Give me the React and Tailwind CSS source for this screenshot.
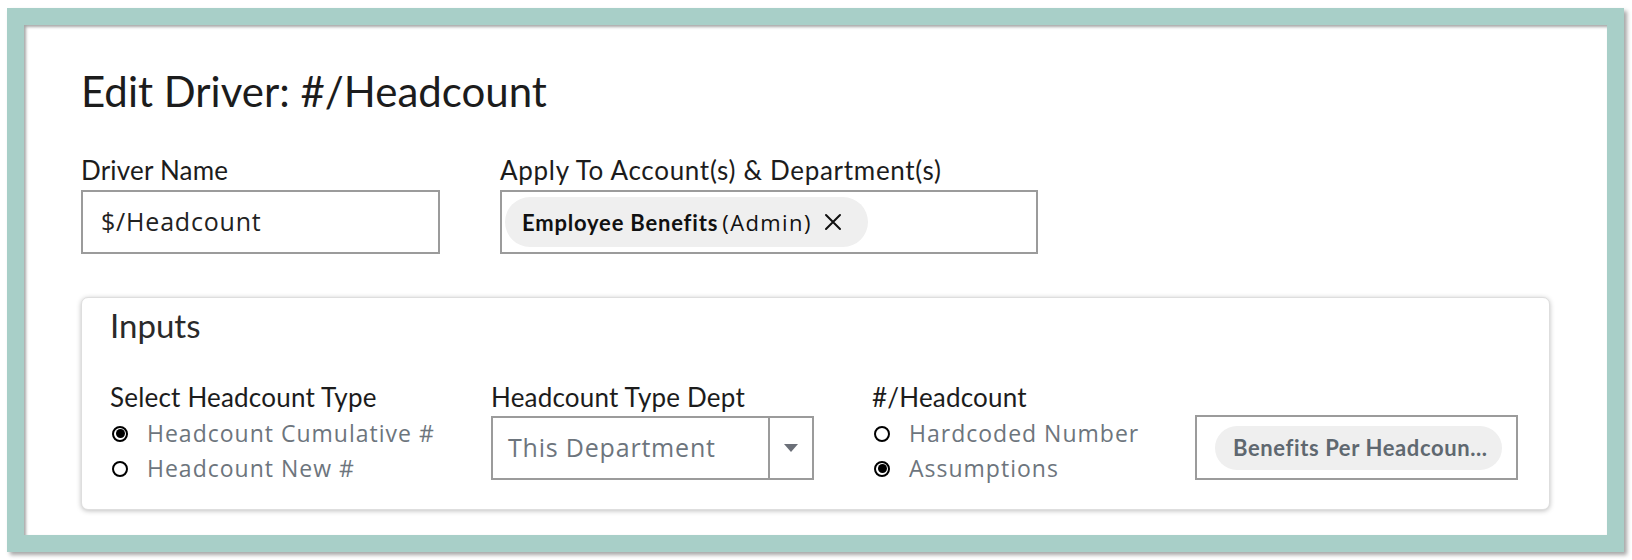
function Radio({ checked }) {
  return (
    <span className="flex h-[16px] w-[16px] items-center justify-center rounded-full border-2 border-black bg-white">
      {checked && <span className="h-[9px] w-[9px] rounded-full bg-black" />}
    </span>
  );
}

function RadioOption({ checked, label }) {
  return (
    <div className="flex h-[35px] items-center">
      <div className="flex w-[37px] pl-[2px]">
        <Radio checked={checked} />
      </div>
      <span className="font-['Open_Sans'] text-[23px] tracking-[1px] text-[#6d757d]">{label}</span>
    </div>
  );
}

export default function App() {
  return (
    <main className="h-[560px] w-full bg-white pl-[7px] pt-[8px] font-['Lato',sans-serif] text-[#1c1c1c]">
      <div className="h-[544px] w-[1617px] border-[17px] border-[#a8cfc8] shadow-[3px_3px_4px_rgba(0,0,0,0.35)]">
        <div className="h-full w-full bg-white pl-[57px] pt-[41px] shadow-[inset_2px_2px_3px_rgba(0,0,0,0.35)]">
          <h1 className="text-[42px] leading-[50px]">Edit Driver: #/Headcount</h1>

          <div className="mt-[38px] flex gap-[60px]">
            <label className="flex flex-col">
              <span className="text-[26px] leading-[32px] tracking-[0.2px]">Driver Name</span>
              <div className="mt-[4px] flex h-[64px] w-[359px] items-center border-2 border-[#9b9b9b] px-[18px] font-['Open_Sans'] text-[25px] tracking-[0.8px] text-[#222]">
                $/Headcount
              </div>
            </label>

            <label className="flex flex-col">
              <span className="text-[26px] leading-[32px] tracking-[0.7px]">Apply To Account(s) &amp; Department(s)</span>
              <div className="mt-[4px] flex h-[64px] w-[538px] items-center border-2 border-[#9b9b9b] px-[3px]">
                <span className="flex h-[50px] items-center gap-[12px] rounded-full bg-[#efefef] pl-[17px] pr-[26px] text-[#111]">
                  <span>
                    <span className="text-[22px] font-bold tracking-[0.8px]">Employee Benefits</span>{' '}
                    <span className="font-['Open_Sans'] text-[22px] tracking-[1.4px]">(Admin)</span>
                  </span>
                  <svg width="18" height="18" viewBox="0 0 18 18" className="text-[#111]">
                    <path d="M2 2 L16 16 M16 2 L2 16" stroke="currentColor" strokeWidth="2" strokeLinecap="round" />
                  </svg>
                </span>
              </div>
            </label>
          </div>

          <section className="mt-[43px] h-[213px] w-[1469px] rounded-[7px] border border-[#dedede] bg-white pl-[28px] pt-[7px] shadow-[0_1px_5px_rgba(0,0,0,0.25)]">
            <h2 className="text-[33px] leading-[40px] text-[#2a2a2a]">Inputs</h2>

            <div className="mt-[36px] flex">
              <div className="w-[381px]">
                <div className="text-[26px] leading-[32px] tracking-[0.2px]">Select Headcount Type</div>
                <div className="mt-[3px]">
                  <RadioOption checked label="Headcount Cumulative #" />
                  <RadioOption label="Headcount New #" />
                </div>
              </div>

              <div className="w-[381px]">
                <div className="text-[26px] leading-[32px] tracking-[0.2px]">Headcount Type Dept</div>
                <div className="mt-[3px] flex h-[64px] w-[323px] border-2 border-[#9b9b9b]">
                  <div className="flex flex-1 items-center pl-[15px] font-['Open_Sans'] text-[25px] tracking-[0.8px] text-[#6d757d]">
                    This Department
                  </div>
                  <div className="flex w-[44px] items-center justify-center border-l-2 border-[#9b9b9b]">
                    <svg width="14" height="8" viewBox="0 0 14 8">
                      <path d="M0 0 L14 0 L7 8 Z" fill="#6b6f78" />
                    </svg>
                  </div>
                </div>
              </div>

              <div className="w-[323px]">
                <div className="text-[26px] leading-[32px] tracking-[0.2px]">#/Headcount</div>
                <div className="mt-[3px]">
                  <RadioOption label="Hardcoded Number" />
                  <RadioOption checked label="Assumptions" />
                </div>
              </div>

              <div className="pt-[34px]">
                <div className="flex h-[65px] w-[323px] items-center border-2 border-[#9b9b9b] pl-[18px] pr-[14px]">
                  <span className="flex h-[44px] flex-1 items-center rounded-full bg-[#efefef] pl-[18px] text-[22px] font-bold tracking-[0.6px] text-[#5f6870]">
                    Benefits Per Headcoun...
                  </span>
                </div>
              </div>
            </div>
          </section>
        </div>
      </div>
    </main>
  );
}
